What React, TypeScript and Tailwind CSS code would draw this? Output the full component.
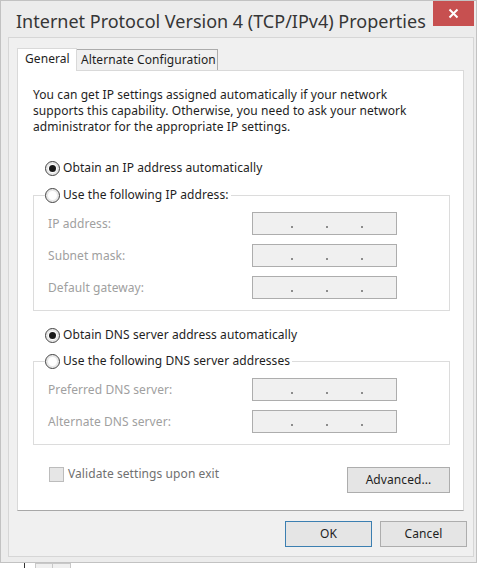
import React from "react";

function Radio({ checked }: { checked?: boolean }) {
  return (
    <span className="flex h-[15px] w-[15px] shrink-0 items-center justify-center rounded-full border border-[#404040] bg-white shadow-[inset_0_0_0_2px_#e8e8e8]">
      {checked && <span className="h-[7px] w-[7px] rounded-full bg-[#1a1a1a]" />}
    </span>
  );
}

function IpBox() {
  return (
    <div className="flex h-[23px] w-[145px] shrink-0 items-end gap-[33px] border border-[#adadad] bg-[#f0f0f0] pb-[6px] pl-[38px]">
      <span className="h-[2px] w-[2px] bg-[#8c8c8c]" />
      <span className="h-[2px] w-[2px] bg-[#8c8c8c]" />
      <span className="h-[2px] w-[2px] bg-[#8c8c8c]" />
    </div>
  );
}

function Field({ label }: { label: string }) {
  return (
    <div className="flex h-[23px] items-center pl-[14px]">
      <span className="w-[204px] shrink-0 text-[#a0a0a0]">{label}</span>
      <IpBox />
    </div>
  );
}

function RadioRow({ checked, label }: { checked?: boolean; label: string }) {
  return (
    <div className="flex h-[16px] items-center gap-[3px]">
      <Radio checked={checked} />
      <span className="text-[#1e1e1e]">{label}</span>
    </div>
  );
}

function Group({ legend, fields }: { legend: string; fields: string[] }) {
  return (
    <fieldset className="border border-[#dcdcdc] pb-[11px]">
      <legend className="ml-[11px] bg-white pr-[2px]">
        <RadioRow label={legend} />
      </legend>
      <div className="flex flex-col gap-[9px] pt-[9px]">
        {fields.map((f) => (
          <Field key={f} label={f} />
        ))}
      </div>
    </fieldset>
  );
}

function Button({ label, primary, w }: { label: string; primary?: boolean; w: string }) {
  return (
    <div
      className={
        "flex h-[26px] items-center justify-center border bg-[#e5e5e5] text-[#1e1e1e] " +
        w +
        (primary ? " border-[#3c7fb1]" : " border-[#adadad]")
      }
    >
      {label}
    </div>
  );
}

export default function App() {
  return (
    <div className="h-[568px] w-[477px] overflow-hidden bg-white font-['Noto_Sans',sans-serif] text-[12px] leading-[16px] tracking-[0.08px]">
      <div className="flex h-[563px] w-[477px] flex-col border border-[#c2c2c2] bg-[#ececec]">
        {/* title bar */}
        <div className="flex h-[36px] shrink-0 items-start justify-between">
          <div className="pl-[15px] pt-[8px] text-[18px] leading-[24px] tracking-normal text-[#363636]">
            Internet Protocol Version 4 (TCP/IPv4) Properties
          </div>
          <div className="mr-[2px] flex h-[25px] w-[41px] shrink-0 items-center justify-center bg-[#c75050]">
            <svg width="11" height="11" viewBox="0 0 11 11">
              <path d="M1.5 1.5 L9.5 9.5 M9.5 1.5 L1.5 9.5" stroke="#fff" strokeWidth="2" />
            </svg>
          </div>
        </div>
        {/* client */}
        <div className="ml-[7px] mr-[2px] flex h-[520px] flex-col border border-[#d6d6d6] bg-[#f0f0f0]">
          <div className="pl-[8px] pr-[9px] pt-[10px]">
            {/* tabs */}
            <div className="flex h-[22px] items-end">
              <div className="relative z-10 mb-[-1px] flex h-[23px] w-[60px] items-start border border-b-0 border-[#d9d9d9] bg-white pl-[7px] pt-[2px] text-[#1e1e1e]">
                General
              </div>
              <div className="flex h-[21px] w-[141px] items-center border border-b-0 border-l-0 border-[#acacac] bg-[#f0f0f0] pl-[4px] text-[#1e1e1e]">
                Alternate Configuration
              </div>
            </div>
            {/* panel */}
            <div className="flex h-[441px] flex-col border border-[#d9d9d9] border-b-[#a8a8a8] bg-white pl-[15px] pr-[13px] pt-[16px]">
              <p className="text-[#1e1e1e]">
                You can get IP settings assigned automatically if your network
                <br />
                supports this capability. Otherwise, you need to ask your network
                <br />
                administrator for the appropriate IP settings.
              </p>
              <div className="ml-[12px] mt-[25px]">
                <RadioRow checked label="Obtain an IP address automatically" />
              </div>
              <div className="mt-[11px]">
                <Group
                  legend="Use the following IP address:"
                  fields={["IP address:", "Subnet mask:", "Default gateway:"]}
                />
              </div>
              <div className="ml-[12px] mt-[16px]">
                <RadioRow checked label="Obtain DNS server address automatically" />
              </div>
              <div className="mt-[10px]">
                <Group
                  legend="Use the following DNS server addresses"
                  fields={["Preferred DNS server:", "Alternate DNS server:"]}
                />
              </div>
              <div className="mt-[21px] flex items-start justify-between">
                <div className="ml-[16px] flex h-[16px] items-center gap-[4px]">
                  <span className="h-[15px] w-[15px] border border-[#bcbcbc] bg-[#e6e6e6]" />
                  <span className="text-[#707070]">Validate settings upon exit</span>
                </div>
                <div className="mt-[1px]">
                  <Button label="Advanced..." w="w-[103px] h-[25px]" />
                </div>
              </div>
            </div>
          </div>
          {/* buttons */}
          <div className="mt-[10px] flex justify-end gap-[8px] pr-[6px]">
            <Button label="OK" primary w="w-[87px]" />
            <Button label="Cancel" w="w-[87px]" />
          </div>
        </div>
      </div>
      <div className="flex h-[5px] items-start pl-[24px]">
        <span className="mr-[10px] h-[5px] w-[1px] bg-[#333]" />
        <span className="h-[5px] w-[18px] border border-b-0 border-[#c8c8c8] bg-[#f0f0f0]" />
        <span className="h-[5px] w-[18px] border border-b-0 border-l-0 border-[#c8c8c8] bg-[#f0f0f0]" />
      </div>
    </div>
  );
}
